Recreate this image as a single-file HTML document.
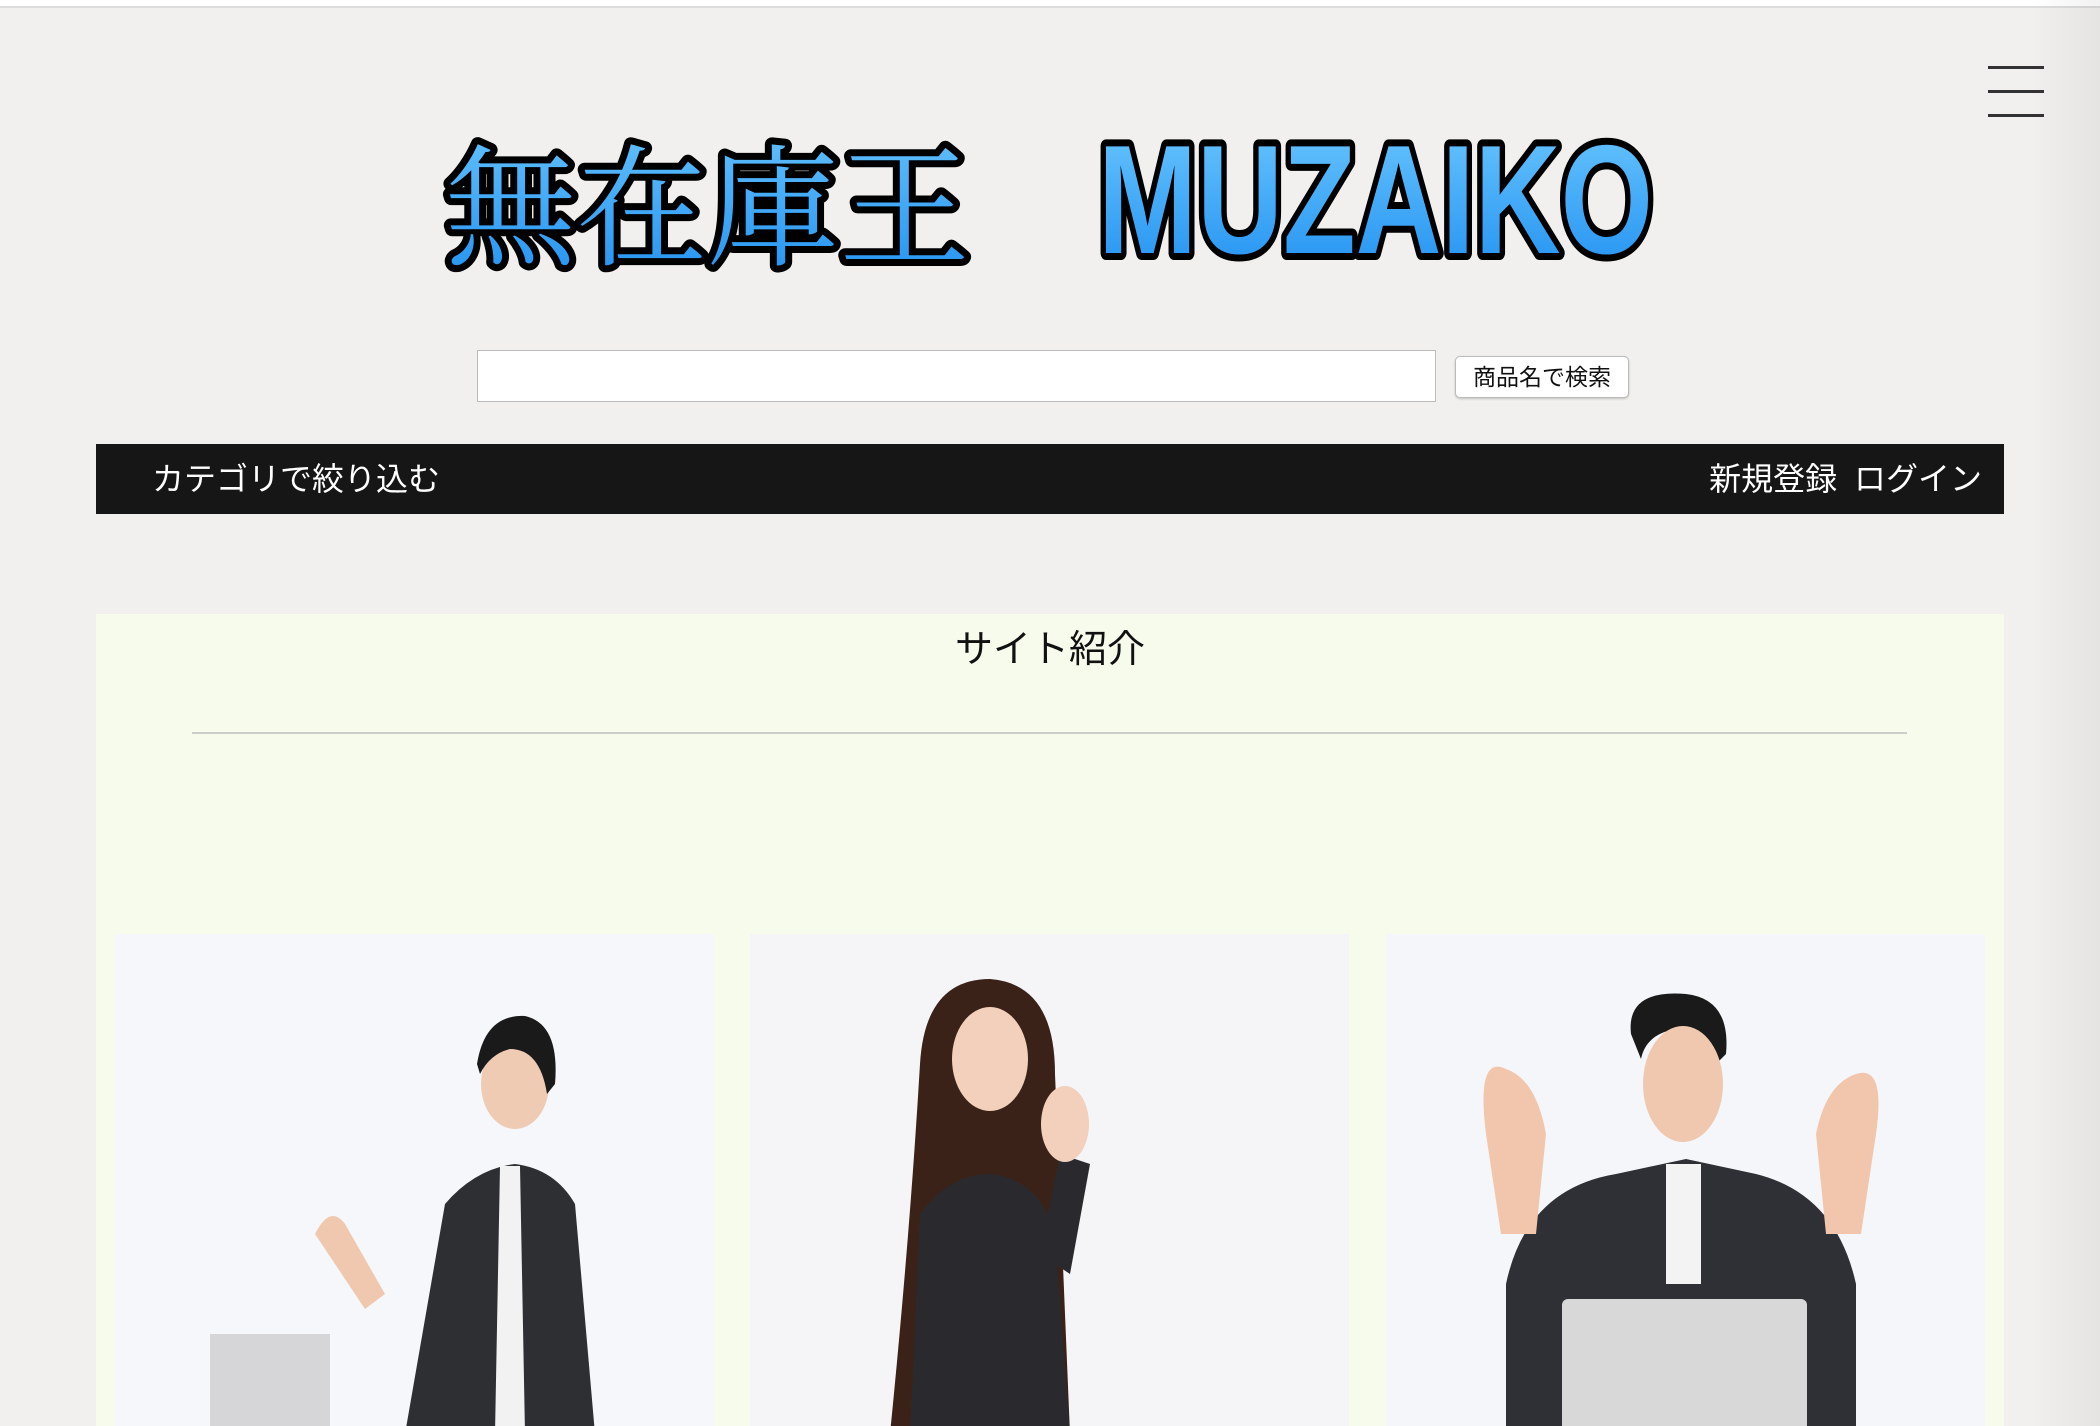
<!DOCTYPE html>
<html><head><meta charset="utf-8">
<style>
html,body{margin:0;padding:0}
body{width:2100px;height:1426px;overflow:hidden;background:#f1f0ee;position:relative;font-family:"Liberation Sans","Noto Sans CJK JP",sans-serif}
.topline{position:absolute;left:0;top:0;width:2100px;height:6px;background:#fff;border-bottom:2px solid #dcdcdc}
.hb{position:absolute;left:1988px;width:56px;height:3px;background:#333}
.search{position:absolute;left:477px;top:350px;width:959px;height:52px;background:#fff;border:1px solid #bbb;box-sizing:border-box}
.btn{position:absolute;left:1455px;top:356px;width:174px;height:42px;background:#fff;border:1px solid #bbb;border-radius:5px;box-sizing:border-box;font-size:23px;text-align:center;line-height:40px;color:#111;box-shadow:0 1px 2px rgba(0,0,0,.2)}
.nav{position:absolute;left:96px;top:444px;width:1908px;height:70px;background:#161616;color:#fff;font-size:32px}
.nav .l{position:absolute;left:56px;top:10px}
.nav .r{position:absolute;right:22px;top:10px;word-spacing:8px}
.content{position:absolute;left:96px;top:614px;width:1908px;height:812px;background:#f7fbec;overflow:hidden}
.title{position:absolute;left:0;width:1908px;top:4px;text-align:center;font-size:38px;color:#111}
.hr{position:absolute;left:96px;top:118px;width:1715px;height:2px;background:#ccc}
.ph{position:absolute;top:320px;width:599px;height:500px;overflow:hidden}
.shadow{position:absolute;left:2030px;top:0;width:70px;height:1426px;background:linear-gradient(to right,rgba(0,0,0,0),rgba(0,0,0,.05))}
</style></head><body>
<div class="topline"></div>
<div class="shadow"></div>
<div class="hb" style="top:66px"></div>
<div class="hb" style="top:90px"></div>
<div class="hb" style="top:114px"></div>

<svg style="position:absolute;left:420px;top:110px" width="1280" height="180">
<defs>
<linearGradient id="g" x1="0" y1="0" x2="0" y2="1"><stop offset="0" stop-color="#6cc8ff"/><stop offset="1" stop-color="#1f8ff0"/></linearGradient>
</defs>
<text x="25" y="145" font-family="'Noto Serif CJK JP','Noto Serif CJK SC',serif" font-size="132" fill="url(#g)" stroke="#000" stroke-width="14" paint-order="stroke" stroke-linejoin="round" textLength="525" lengthAdjust="spacingAndGlyphs">無在庫王</text>
<text x="678" y="143" font-family="'Liberation Sans',sans-serif" font-weight="bold" font-size="155" fill="url(#g)" stroke="#000" stroke-width="14" paint-order="stroke" stroke-linejoin="round" textLength="555" lengthAdjust="spacingAndGlyphs">MUZAIKO</text>
</svg>

<div class="search"></div>
<div class="btn">商品名で検索</div>
<div class="nav"><span class="l">カテゴリで絞り込む</span><span class="r">新規登録 ログイン</span></div>

<div class="content">
<div class="title">サイト紹介</div>
<div class="hr"></div>

<div class="ph" style="left:19px">
<svg width="599" height="500"><rect width="599" height="500" fill="#f6f7fb"/>
<ellipse cx="400" cy="150" rx="34" ry="45" fill="#f0cbb3"/>
<path d="M362 130 Q370 80 410 82 Q445 90 440 150 L432 160 Q425 115 395 115 Q375 120 365 140Z" fill="#1a1a1a"/>
<path d="M330 270 Q360 235 400 230 Q440 235 460 270 L480 500 L290 500 Z" fill="#2e2f33"/>
<path d="M385 232 L405 232 L410 500 L380 500Z" fill="#f2f2f2"/>
<path d="M200 300 Q215 270 230 290 L270 360 L250 375Z" fill="#f0c8b0"/>
<rect x="95" y="400" width="120" height="100" fill="#d6d6d8"/>
</svg></div>

<div class="ph" style="left:654px">
<svg width="599" height="500"><rect width="599" height="500" fill="#f5f5f8"/>
<path d="M170 130 Q175 45 240 45 Q305 50 305 140 L320 500 L140 500 Q160 300 170 130Z" fill="#3a2218"/>
<ellipse cx="240" cy="125" rx="38" ry="52" fill="#f2d0bc"/>
<path d="M170 280 Q200 240 240 240 Q290 245 305 300 L320 500 L160 500Z" fill="#2a2a2e"/>
<path d="M290 320 L310 220 L340 230 L320 340Z" fill="#2a2a2e"/>
<ellipse cx="315" cy="190" rx="24" ry="38" fill="#f2d0bc"/>
</svg></div>

<div class="ph" style="left:1290px">
<svg width="599" height="500"><rect width="599" height="500" fill="#f5f6fa"/>
<path d="M245 100 Q240 55 300 60 Q345 65 340 120 L330 130 Q320 90 290 95 Q260 100 255 125Z" fill="#1a1a1a"/>
<ellipse cx="297" cy="150" rx="40" ry="58" fill="#f0c8b0"/>
<path d="M120 350 Q140 255 230 240 L300 225 L370 240 Q450 260 470 350 L470 500 L120 500Z" fill="#2f3035"/>
<path d="M280 230 L315 230 L315 350 L280 350Z" fill="#f3f3f3"/>
<path d="M100 200 Q90 120 120 135 Q150 145 160 200 L150 300 L115 300Z" fill="#f2c6ad"/>
<path d="M490 200 Q500 130 470 140 Q440 150 430 200 L440 300 L475 300Z" fill="#f2c6ad"/>
<rect x="176" y="365" width="245" height="135" rx="6" fill="#d9d8d8"/>
</svg></div>
</div>
</body></html>
